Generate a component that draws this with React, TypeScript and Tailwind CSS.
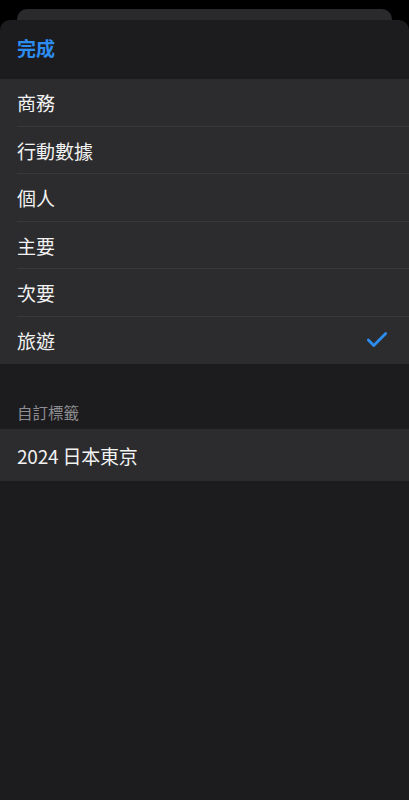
import { Check } from 'lucide-react';

const tags = ['商務', '行動數據', '個人', '主要', '次要', '旅遊'];
const selected = '旅遊';

const font = { fontFamily: '"Noto Sans CJK TC", "Noto Sans", sans-serif' };

const App = () => {
  return (
    <div className="min-h-[800px] h-[800px] bg-black flex flex-col overflow-hidden" style={font}>
      <div className="pt-[9px] px-[17px]">
        <div className="h-[20px] rounded-t-[10px] bg-[#2a2a2c]" />
      </div>
      <div className="-mt-[9px] flex-1 bg-[#1c1c1e] rounded-t-[10px] flex flex-col">
        <div className="h-[59px] flex items-center px-[17px] pb-[5px]">
          <button className="text-[19px] font-bold text-[#2d8cf0] leading-none">完成</button>
        </div>

        <div className="bg-[#2c2c2e]">
          {tags.map((tag, i) => (
            <div key={tag} className="relative h-[47.5px] flex items-center justify-between pl-[17px] pr-[19px]">
              <span className="text-[19px] text-[#f2f2f2] leading-none">{tag}</span>
              {tag === selected && <Check className="w-[26px] h-[26px] text-[#2d8cf0]" strokeWidth={2.6} />}
              {i < tags.length - 1 && (
                <div className="absolute bottom-0 left-[17px] right-0 h-px bg-[#38383a]" />
              )}
            </div>
          ))}
        </div>

        <div className="h-[65px] flex items-end px-[17px] pb-[9px]">
          <span className="text-[15.5px] text-[#8d8d92] leading-none">自訂標籤</span>
        </div>

        <div className="bg-[#2c2c2e] h-[52px] flex items-center px-[17px]">
          <span className="text-[19px] text-[#f2f2f2] leading-none tracking-[-0.2px]">2024 日本東京</span>
        </div>
      </div>
    </div>
  );
};

export default App;
